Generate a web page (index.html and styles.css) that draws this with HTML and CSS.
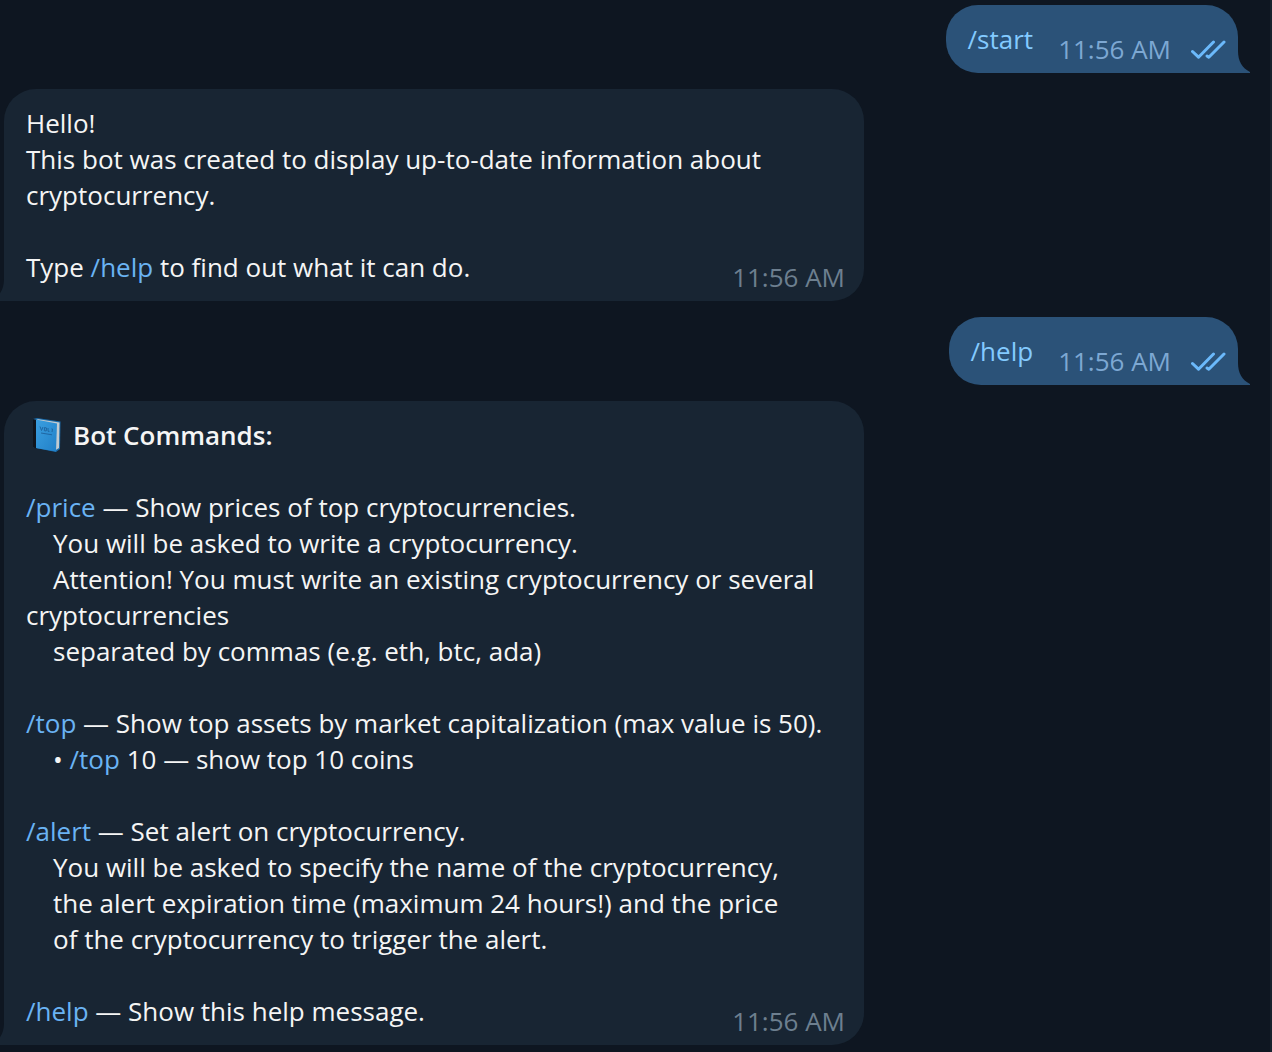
FILE: index.html
```html
<!DOCTYPE html>
<html lang="en">
<head>
<meta charset="utf-8">
<meta name="viewport" content="width=device-width, initial-scale=1">
<title>Crypto bot chat</title>
<link rel="stylesheet" href="styles.css">
</head>
<body>
<main class="chat">
  <article class="message outgoing">
    <p class="text"><a class="command" href="#start">/start</a></p>
    <time class="time">11:56 AM</time>
    <svg class="ticks" viewBox="0 0 36 20" aria-label="Read" role="img"><path d="M1.500 11.500L7.500 17.200L22.500 2M16 16L17.800 17.200L33 2"/></svg>
    <svg class="tail" viewBox="0 0 12 22" aria-hidden="true"><path d="M0 0C0 10 4 17 12 21V22H0Z"/></svg>
  </article>

  <article class="message incoming">
    <p class="text">Hello!
This bot was created to display up-to-date information about cryptocurrency.

Type <a class="command" href="#help">/help</a> to find out what it can do.</p>
    <time class="time">11:56 AM</time>
    <svg class="tail" viewBox="0 0 12 22" aria-hidden="true"><path d="M12 0C12 10 8 17 0 21V22H12Z"/></svg>
  </article>

  <article class="message outgoing">
    <p class="text"><a class="command" href="#help">/help</a></p>
    <time class="time">11:56 AM</time>
    <svg class="ticks" viewBox="0 0 36 20" aria-label="Read" role="img"><path d="M1.500 11.500L7.500 17.200L22.500 2M16 16L17.800 17.200L33 2"/></svg>
    <svg class="tail" viewBox="0 0 12 22" aria-hidden="true"><path d="M0 0C0 10 4 17 12 21V22H0Z"/></svg>
  </article>

  <article class="message incoming" id="help">
    <div class="body">
      <h1 class="title"><svg class="book" viewBox="0 0 28 34" aria-hidden="true">
        <defs><linearGradient id="cover" x1="0" y1="0" x2="1" y2="1"><stop offset="0" stop-color="#3b9fe0"/><stop offset="1" stop-color="#2180c8"/></linearGradient></defs>
        <path d="M0 1L4 0L27.500 3.500L27 31L23 34L0 29.500Z" fill="#1b6cab"/>
        <path d="M4 1L26.500 4.500L26 30L22 32.500Z" fill="#c3cbd0"/>
        <path d="M0 1L3.500 2V30.500L0 29.500Z" fill="#10151d"/>
        <path d="M3 1.500L24 5.500L23 33.500L3 30Z" fill="url(#cover)"/>
        <path d="M7 8.500L8.500 12.500L10 9M11.500 9.500L13.500 10L13.200 13L11.300 12.700ZM15 10V13.300H16.500M18.500 10.800L19.500 11L19 14M8 15L19 16.800" fill="none" stroke="#1f66a2" stroke-width="1"/>
      </svg>Bot Commands:</h1>
      <p class="text">
<a class="command" href="#price">/price</a> — Show prices of top cryptocurrencies.
    You will be asked to write a cryptocurrency.
    Attention! You must write an existing cryptocurrency or several cryptocurrencies
    separated by commas (e.g. eth, btc, ada)

<a class="command" href="#top">/top</a> — Show top assets by market capitalization (max value is 50).
    • <a class="command" href="#top">/top</a> 10 — show top 10 coins

<a class="command" href="#alert">/alert</a> — Set alert on cryptocurrency.
    You will be asked to specify the name of the cryptocurrency,
    the alert expiration time (maximum 24 hours!) and the price
    of the cryptocurrency to trigger the alert.

<a class="command" href="#help">/help</a> — Show this help message.</p>
    </div>
    <time class="time">11:56 AM</time>
    <svg class="tail" viewBox="0 0 12 22" aria-hidden="true"><path d="M12 0C12 10 8 17 0 21V22H12Z"/></svg>
  </article>
</main>
</body>
</html>
```
FILE: styles.css
```css
* {
  box-sizing: border-box;
}

body {
  margin: 0;
  background: #0e1621;
  color: #f5f5f5;
  font: 26px/36px "Open Sans", "Noto Sans", sans-serif;
  font-kerning: none;
}

.chat {
  display: flex;
  flex-direction: column;
  gap: 16px;
  min-height: 100vh;
  padding: 5px 32px 7px 4px;
  border-right: 2px solid #18222d;
}

.message {
  position: relative;
  border-radius: 32px;
}

.text,
.title {
  margin: 0;
  font-size: 26px;
}

.text {
  white-space: pre-wrap;
}

.command {
  color: #6ab3f3;
  text-decoration: none;
}

.time {
  color: #6d7f8f;
}

.tail {
  position: absolute;
  bottom: 0;
  width: 12px;
  height: 22px;
}

.incoming {
  display: grid;
  align-self: flex-start;
  width: 100%;
  max-width: 860px;
  padding: 16px 19px 16px 22px;
  border-bottom-left-radius: 0;
  background: #182533;
}

.incoming > .text,
.incoming > .body,
.incoming > .time {
  grid-area: 1 / 1;
}

.incoming > .time {
  place-self: end;
  margin-bottom: -10px;
}

.incoming .tail {
  right: 100%;
  fill: #182533;
}

.outgoing {
  display: flex;
  align-self: flex-end;
  align-items: flex-end;
  padding: 16px 11px 16px 22px;
  border-bottom-right-radius: 0;
  background: #2b5278;
}

.outgoing .command {
  color: #83caff;
}

.outgoing .time {
  margin: 0 20px -10px 25px;
  color: #7da8d3;
}

.outgoing .tail {
  left: 100%;
  fill: #2b5278;
}

.ticks {
  width: 36px;
  height: 20px;
  margin-bottom: -3px;
  fill: none;
  stroke: #6bb9fb;
  stroke-width: 3;
  stroke-linecap: round;
  stroke-linejoin: round;
}

.title {
  display: flex;
  align-items: center;
  gap: 12px;
  padding-left: 7px;
  font-weight: 600;
}

.book {
  width: 28px;
  height: 34px;
}
```
